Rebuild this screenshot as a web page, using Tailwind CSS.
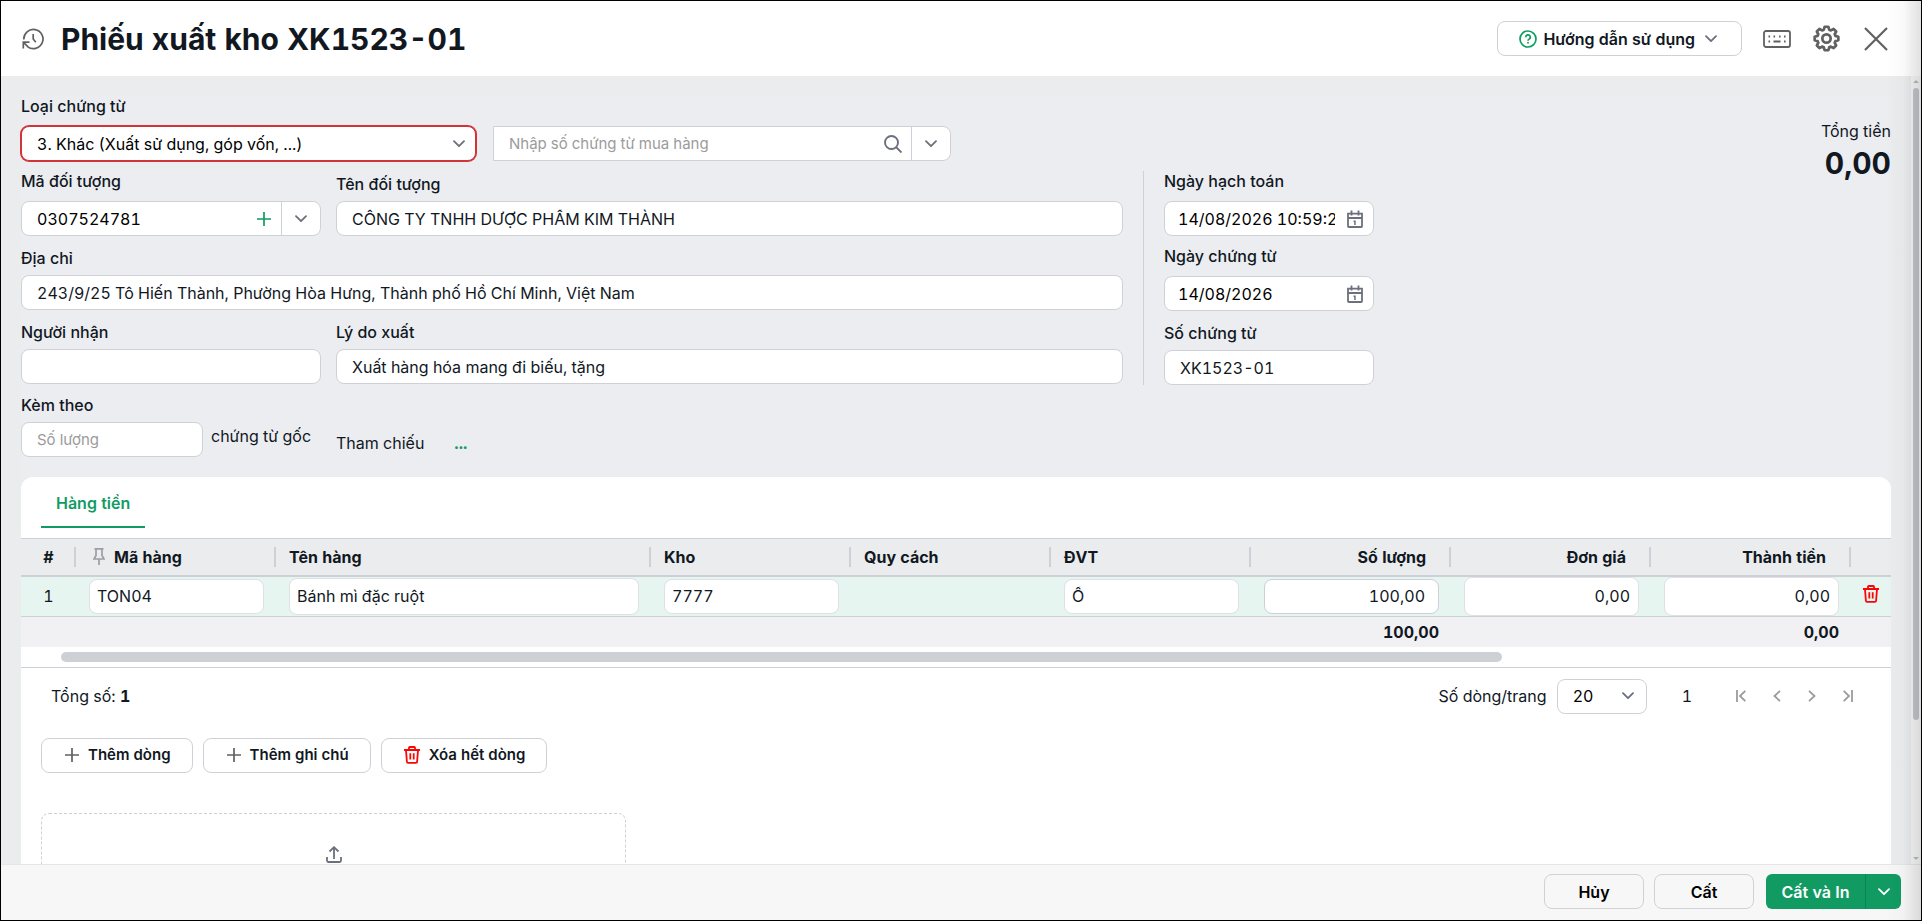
<!DOCTYPE html>
<html lang="vi">
<head>
  <meta charset="UTF-8">
  <meta name="viewport" content="width=device-width, initial-scale=1.0">
  <title>Phiếu xuất kho XK1523-01</title>
  <script src="https://cdn.jsdelivr.net/npm/@tailwindcss/browser@4"></script>
</head>
<body class="font-['Inter','Noto_Sans',sans-serif] text-base leading-5 text-[#11181f] tabular-nums">
  <!-- Shared icons -->
  <svg class="hidden">
    <symbol id="chevron" viewBox="0 0 12 8"><path d="M1 1.2l5 5 5-5" fill="none" stroke="currentColor" stroke-width="1.8" stroke-linecap="round" stroke-linejoin="round"/></symbol>
    <symbol id="plus" viewBox="0 0 14 14"><path d="M7 0v14M0 7h14" fill="none" stroke="currentColor" stroke-width="1.7"/></symbol>
    <symbol id="calendar" viewBox="0 0 16 18"><path d="M1 3.6h14v12.6a.8.8 0 0 1-.8.8H1.8a.8.8 0 0 1-.8-.8zM1 8h14M4.5 .5v5M11.5 .5v5" fill="none" stroke="currentColor" stroke-width="1.8"/><path d="M6.500 10.500h2.200v4.500h-1.500v-3h-.7z" fill="currentColor"/></symbol>
    <symbol id="trash" viewBox="0 0 16 18"><path d="M0 4h16M5 3.600V1.800a.8.8 0 0 1 .8-.8h4.400a.8.8 0 0 1 .8.8v1.800M2 4.200l.9 11.600a1.200 1.200 0 0 0 1.200 1.100h7.800a1.200 1.200 0 0 0 1.200-1.100L14 4.200M6.300 7.200v6.300M9.700 7.200v6.300" fill="none" stroke="currentColor" stroke-width="1.800"/></symbol>
  </svg>

  <div class="relative flex h-screen flex-col overflow-hidden border border-black bg-white">
    <!-- Header -->
    <header class="flex h-[75px] shrink-0 items-center justify-between pr-[33px] pl-[21px]">
      <div class="flex items-center gap-[17px]">
        <button type="button" aria-label="Lịch sử" class="text-[#616161]">
          <svg class="size-[22px]" viewBox="0 0 22 22" fill="none" stroke="currentColor" stroke-width="1.700"><path d="M1.800 11.500A9.600 9.600 0 1 1 5.500 18.600M1.300 20.500v-6.300h6.200M1.600 14.400l4.400 4.500M11.200 6v5l2.600 3.200"/></svg>
        </button>
        <h1 class="text-[30px] leading-10 font-bold">Phiếu xuất kho XK1523-01</h1>
      </div>
      <div class="flex items-center text-[#616161]">
        <button type="button" class="mr-[21px] flex h-[35px] items-center gap-1.5 rounded-lg border border-[#d0d1d6] pr-6 pl-[21px] font-semibold text-[#11181f]">
          <svg class="size-[18px] text-[#119b63]" viewBox="0 0 18 18" fill="none" stroke="currentColor" stroke-width="1.700"><circle cx="9" cy="9" r="8"/><path d="M6.700 7.200a2.300 2.300 0 1 1 3.500 1.900c-.8.500-1.200.8-1.200 1.700M9 12v1.600"/></svg>
          Hướng dẫn sử dụng
          <svg class="ml-1 h-2 w-3 text-[#6b707c]"><use href="#chevron"/></svg>
        </button>
        <button type="button" aria-label="Phím tắt">
          <svg class="h-[18px] w-7" viewBox="0 0 28 18"><rect x="1" y="1" width="26" height="16" rx="2" fill="none" stroke="currentColor" stroke-width="1.800"/><path d="M5.500 6.500h1.600M10.500 6.500h1.600M16 6.500h1.600M21 6.500h1.600M5.500 11.500h1.600M10.500 11.500h7M21 11.500h1.600" stroke="currentColor" stroke-width="1.800"/></svg>
        </button>
        <button type="button" aria-label="Thiết lập" class="ml-[22px]">
          <svg class="size-[27px]" viewBox="0 0 26 26" fill="none" stroke="currentColor" stroke-width="2.600" stroke-linejoin="round"><path d="M11.200 1.700h3.600l.8 2.800 1.600.7 2.600-1.400 2.500 2.500-1.400 2.600.7 1.600 2.800.8v3.400l-2.800.8-.7 1.600 1.400 2.600-2.500 2.500-2.600-1.400-1.600.7-.8 2.800h-3.600l-.8-2.800-1.600-.7-2.600 1.400-2.500-2.500 1.400-2.600-.7-1.600-2.800-.8v-3.400l2.800-.8.7-1.600-1.400-2.600 2.500-2.500 2.600 1.400 1.600-.7z"/><circle cx="13" cy="13" r="4"/></svg>
        </button>
        <button type="button" aria-label="Đóng" class="ml-6">
          <svg class="size-6" viewBox="0 0 24 24" stroke="currentColor" stroke-width="2.200"><path d="M1 1l22 22M23 1L1 23"/></svg>
        </button>
      </div>
    </header>

    <!-- Body -->
    <div class="flex min-h-0 flex-1">
      <main class="min-w-0 flex-1 overflow-hidden bg-[#ebecee] p-5">
        <form id="voucher" class="flex items-start justify-between bg-[#ecedf1] pb-5">
          <div class="max-w-[1353px] flex-1">
            <label for="type" class="mb-2.5 block font-medium">Loại chứng từ</label>
            <div class="flex gap-[17px]">
              <div class="grid w-[455px] items-center">
                <select id="type" class="h-[35px] appearance-none rounded-lg border border-[#d13438] bg-white px-[15px] text-black ring-1 ring-[#d13438] [grid-area:1/1]">
                  <option>3. Khác (Xuất sử dụng, góp vốn, ...)</option>
                </select>
                <svg class="pointer-events-none mr-[11px] h-2 w-3 justify-self-end text-[#6b707c] [grid-area:1/1]"><use href="#chevron"/></svg>
              </div>
              <div class="flex h-[35px] w-[458px] items-center rounded-r-lg border border-[#d0d1d6] bg-white">
                <input type="text" aria-label="Số chứng từ mua hàng" placeholder="Nhập số chứng từ mua hàng" class="min-w-0 flex-1 pl-[15px] text-[15px] outline-none placeholder:text-[#9b9b9b]">
                <button type="button" aria-label="Tìm kiếm" class="mr-[9px] text-[#6b707c]">
                  <svg class="size-[18px]" viewBox="0 0 18 18" fill="none" stroke="currentColor" stroke-width="1.900"><circle cx="7.500" cy="7.500" r="6.500"/><path d="M12 12l5.500 5.500"/></svg>
                </button>
                <button type="button" aria-label="Mở danh sách" class="flex h-full w-[39px] items-center justify-center border-l border-[#d0d1d6] text-[#6b707c]"><svg class="h-2 w-3"><use href="#chevron"/></svg></button>
              </div>
            </div>

            <div class="mt-2.5 flex items-start">
              <div class="min-w-0 flex-1">
                <div class="flex items-end gap-[15px]">
                  <div class="w-[300px]">
                    <label for="code" class="mb-2.5 block font-medium">Mã đối tượng</label>
                    <div class="flex h-[35px] items-center rounded-lg border border-[#d0d1d6] bg-white">
                      <input id="code" type="text" value="0307524781" class="min-w-0 flex-1 pl-[15px] text-black outline-none">
                      <button type="button" aria-label="Thêm đối tượng" class="mr-2.5 text-[#119b63]"><svg class="size-3.5"><use href="#plus"/></svg></button>
                      <button type="button" aria-label="Chọn đối tượng" class="flex h-full w-[39px] items-center justify-center border-l border-[#d0d1d6] text-[#6b707c]"><svg class="h-2 w-3"><use href="#chevron"/></svg></button>
                    </div>
                  </div>
                  <div class="min-w-0 flex-1">
                    <label for="name" class="mb-[7px] block font-medium">Tên đối tượng</label>
                    <input id="name" type="text" value="CÔNG TY TNHH DƯỢC PHẨM KIM THÀNH" class="block h-[35px] w-full rounded-lg border border-[#d0d1d6] bg-white px-[15px]">
                  </div>
                </div>
                <div class="mt-3">
                  <label for="address" class="mb-[7px] block font-medium">Địa chỉ</label>
                  <input id="address" type="text" value="243/9/25 Tô Hiến Thành, Phường Hòa Hưng, Thành phố Hồ Chí Minh, Việt Nam" class="block h-[35px] w-full rounded-lg border border-[#d0d1d6] bg-white px-[15px]">
                </div>
                <div class="mt-3 flex gap-[15px]">
                  <div class="w-[300px]">
                    <label for="receiver" class="mb-[7px] block font-medium">Người nhận</label>
                    <input id="receiver" type="text" class="block h-[35px] w-full rounded-lg border border-[#d0d1d6] bg-white px-[15px]">
                  </div>
                  <div class="min-w-0 flex-1">
                    <label for="reason" class="mb-[7px] block font-medium">Lý do xuất</label>
                    <input id="reason" type="text" value="Xuất hàng hóa mang đi biếu, tặng" class="block h-[35px] w-full rounded-lg border border-[#d0d1d6] bg-white px-[15px]">
                  </div>
                </div>
              </div>

              <div class="ml-5 border-l border-[#d0d1d6] pl-5">
                <label for="posted" class="mb-2.5 block font-medium">Ngày hạch toán</label>
                <div class="flex h-[35px] w-[210px] items-center rounded-lg border border-[#d0d1d6] bg-white pr-2.5 pl-[13px] text-[#6b707c]">
                  <input id="posted" type="text" value="14/08/2026 10:59:27" class="mr-3 min-w-0 flex-1 text-black outline-none">
                  <svg class="h-[18px] w-4 shrink-0"><use href="#calendar"/></svg>
                </div>
                <label for="issued" class="mt-2.5 mb-2.5 block font-medium">Ngày chứng từ</label>
                <div class="flex h-[35px] w-[210px] items-center rounded-lg border border-[#d0d1d6] bg-white pr-2.5 pl-[13px] text-[#6b707c]">
                  <input id="issued" type="text" value="14/08/2026" class="mr-3 min-w-0 flex-1 text-black outline-none">
                  <svg class="h-[18px] w-4 shrink-0"><use href="#calendar"/></svg>
                </div>
                <label for="number" class="mt-3 mb-[7px] block font-medium">Số chứng từ</label>
                <input id="number" type="text" value="XK1523-01" class="block h-[35px] w-[210px] rounded-lg border border-[#d0d1d6] bg-white px-[15px]">
              </div>
            </div>

            <div class="mt-2.5">
              <label for="attached" class="mb-[7px] block font-medium">Kèm theo</label>
              <div class="flex items-center">
                <input id="attached" type="text" placeholder="Số lượng" class="h-[35px] w-[182px] rounded-lg border border-[#d0d1d6] bg-white px-[15px] text-[15px] placeholder:text-[#9b9b9b]">
                <span class="w-[133px] pb-2 pl-2">chứng từ gốc</span>
                <span class="pt-1.5">Tham chiếu</span>
                <a href="#" class="ml-[30px] pt-1.5 font-bold text-[#119b63]">...</a>
              </div>
            </div>
          </div>

          <!-- Total -->
          <div class="pt-[25px] text-right">
            <div>Tổng tiền</div>
            <div class="mt-0.5 text-[30px] leading-10 font-bold">0,00</div>
          </div>
        </form>

        <!-- Detail card -->
        <section class="rounded-t-xl bg-white">
          <nav class="flex px-5 pt-2 pb-2.5">
            <button type="button" class="border-b-2 border-[#119b63] px-[15px] pt-2 pb-[13px] font-semibold text-[#119b63]">Hàng tiền</button>
          </nav>

          <table class="w-full table-fixed border-t border-[#d0d1d6]">
            <colgroup>
              <col class="w-[55px]"><col class="w-[200px]"><col><col class="w-[200px]"><col class="w-[200px]"><col class="w-[200px]"><col class="w-[200px]"><col class="w-[200px]"><col class="w-[200px]"><col class="w-10">
            </colgroup>
            <thead class="border-b-2 border-[#cdd0d6] bg-[#ebecee] text-left">
              <tr class="h-[37px]">
                <th class="p-0"><div class="flex items-center justify-between"><span class="flex-1 pl-0.5 text-center">#</span><i class="h-5 w-0.5 bg-[#cdd0d6]"></i></div></th>
                <th class="p-0 pl-[17px]">
                  <div class="flex items-center justify-between">
                    <span class="flex items-center gap-[9px]">
                      <svg class="h-[17px] w-3 text-[#9b9ea6]" viewBox="0 0 12 17" fill="none" stroke="currentColor" stroke-width="1.700"><path d="M1.500 .8h9M3 1v6.500L1 11h10L9 7.500V1M6 11v6"/></svg>
                      Mã hàng
                    </span>
                    <i class="h-5 w-0.5 bg-[#cdd0d6]"></i>
                  </div>
                </th>
                <th class="p-0 pl-[13px]"><div class="flex items-center justify-between">Tên hàng<i class="h-5 w-0.5 bg-[#cdd0d6]"></i></div></th>
                <th class="p-0 pl-[13px]"><div class="flex items-center justify-between">Kho<i class="h-5 w-0.5 bg-[#cdd0d6]"></i></div></th>
                <th class="p-0 pl-[13px]"><div class="flex items-center justify-between">Quy cách<i class="h-5 w-0.5 bg-[#cdd0d6]"></i></div></th>
                <th class="p-0 pl-[13px]"><div class="flex items-center justify-between">ĐVT<i class="h-5 w-0.5 bg-[#cdd0d6]"></i></div></th>
                <th class="p-0"><div class="flex items-center justify-end gap-[23px]">Số lượng<i class="h-5 w-0.5 bg-[#cdd0d6]"></i></div></th>
                <th class="p-0"><div class="flex items-center justify-end gap-[23px]">Đơn giá<i class="h-5 w-0.5 bg-[#cdd0d6]"></i></div></th>
                <th class="p-0"><div class="flex items-center justify-end gap-[23px]">Thành tiền<i class="h-5 w-0.5 bg-[#cdd0d6]"></i></div></th>
                <th class="p-0"></th>
              </tr>
            </thead>
            <tbody>
              <tr class="h-[41px] border-b border-[#cdd0d6] bg-[#e6f5ef]">
                <td class="p-0 text-center">1</td>
                <td class="py-0 pr-3 pl-[13px]"><input type="text" aria-label="Mã hàng" value="TON04" class="block h-[35px] w-full rounded-lg border border-[#dfe0e3] bg-white px-[7px] leading-8"></td>
                <td class="py-0 pr-3 pl-[13px]"><input type="text" aria-label="Tên hàng" value="Bánh mì đặc ruột" class="block h-[37px] w-full rounded-lg border border-[#dfe0e3] bg-white px-[7px] leading-8"></td>
                <td class="py-0 pr-3 pl-[13px]"><input type="text" aria-label="Kho" value="7777" class="block h-[35px] w-full rounded-lg border border-[#dfe0e3] bg-white px-[7px] leading-8"></td>
                <td class="p-0"></td>
                <td class="py-0 pr-3 pl-[13px]"><input type="text" aria-label="ĐVT" value="Ổ" class="block h-[35px] w-full rounded-lg border border-[#dfe0e3] bg-white px-[7px] leading-8"></td>
                <td class="py-0 pr-3 pl-[13px]"><input type="text" aria-label="Số lượng" value="100,00" class="block h-[35px] w-full rounded-lg border border-[#cdd0d6] bg-white px-[13px] text-right leading-8"></td>
                <td class="py-0 pr-3 pl-[13px]"><input type="text" aria-label="Đơn giá" value="0,00" class="block h-[39px] w-full rounded-lg border border-[#dfe0e3] bg-white px-2 text-right leading-8"></td>
                <td class="py-0 pr-3 pl-[13px]"><input type="text" aria-label="Thành tiền" value="0,00" class="block h-[39px] w-full rounded-lg border border-[#dfe0e3] bg-white px-2 text-right leading-8"></td>
                <td class="p-0"><button type="button" aria-label="Xóa dòng" class="mx-auto block pb-1 text-[#f90606]"><svg class="h-[18px] w-4"><use href="#trash"/></svg></button></td>
              </tr>
            </tbody>
            <tfoot class="bg-[#f1f1f3] text-right font-bold">
              <tr class="h-[30px]">
                <td colspan="6"></td>
                <td class="py-0 pr-3">100,00</td>
                <td></td>
                <td class="py-0 pr-3">0,00</td>
                <td></td>
              </tr>
            </tfoot>
          </table>
          <div class="border-b border-[#cdd0d6] py-[5px] pl-10">
            <div class="h-2.5 w-[78.75%] rounded-full bg-[#cdd0d5]"></div>
          </div>

          <!-- Pager -->
          <div class="flex items-center justify-between pt-[11px] pb-3 pr-[38px] pl-[30px]">
            <div>Tổng số: <b>1</b></div>
            <div class="flex items-center text-[#9b9b9b]">
              <label for="rows" class="mr-2.5 text-[#11181f]">Số dòng/trang</label>
              <div class="grid w-[90px] items-center">
                <select id="rows" class="h-[35px] appearance-none rounded-lg border border-[#d0d1d6] bg-white px-[15px] text-black [grid-area:1/1]">
                  <option>20</option>
                </select>
                <svg class="pointer-events-none mr-[13px] h-2 w-3 justify-self-end text-[#6b707c] [grid-area:1/1]"><use href="#chevron"/></svg>
              </div>
              <span class="mr-11 ml-[35px] text-[#11181f]">1</span>
              <button type="button" aria-label="Trang đầu"><svg class="h-3 w-2.5" viewBox="0 0 10 12" fill="none" stroke="currentColor" stroke-width="1.800"><path d="M1 0v12M9.300 .8L4 6l5.300 5.200"/></svg></button>
              <button type="button" aria-label="Trang trước" class="ml-[27px]"><svg class="h-3 w-2" viewBox="0 0 8 12" fill="none" stroke="currentColor" stroke-width="1.800"><path d="M7 .8L1.500 6 7 11.200"/></svg></button>
              <button type="button" aria-label="Trang sau" class="ml-[27px]"><svg class="h-3 w-2" viewBox="0 0 8 12" fill="none" stroke="currentColor" stroke-width="1.800"><path d="M1 .8L6.500 6 1 11.200"/></svg></button>
              <button type="button" aria-label="Trang cuối" class="ml-[27px]"><svg class="h-3 w-2.5" viewBox="0 0 10 12" fill="none" stroke="currentColor" stroke-width="1.800"><path d="M9 0v12M.7 .8L6 6 .7 11.200"/></svg></button>
            </div>
          </div>

          <div class="flex gap-2.5 px-5 pt-3 text-[15px] font-semibold">
            <button type="button" class="flex h-[35px] items-center gap-[9px] rounded-lg border border-[#d0d1d6] pr-[21px] pl-[23px]"><svg class="size-3.5 text-[#616161]"><use href="#plus"/></svg>Thêm dòng</button>
            <button type="button" class="flex h-[35px] items-center gap-[9px] rounded-lg border border-[#d0d1d6] pr-[21px] pl-[23px]"><svg class="size-3.5 text-[#616161]"><use href="#plus"/></svg>Thêm ghi chú</button>
            <button type="button" class="flex h-[35px] items-center gap-[9px] rounded-lg border border-[#d0d1d6] pr-[21px] pl-[22px]"><svg class="h-[18px] w-4 text-[#f90606]"><use href="#trash"/></svg>Xóa hết dòng</button>
          </div>

          <!-- Attachments -->
          <div class="px-5 pt-10">
            <div class="flex h-[120px] w-[585px] justify-center rounded-lg border border-dashed border-[#cdd0d6] pt-8">
              <svg class="h-[17px] w-4 text-[#6b707c]" viewBox="0 0 16 17" fill="none" stroke="currentColor" stroke-width="1.800"><path d="M8 13V1.500M3.500 5.500L8 1.200l4.500 4.300M1 11v3.600A1.400 1.400 0 0 0 2.400 16h11.200a1.400 1.400 0 0 0 1.400-1.400V11"/></svg>
            </div>
          </div>
        </section>
      </main>

      <!-- Scrollbar -->
      <div class="flex w-2.5 shrink-0 flex-col items-center justify-between bg-[#f7f7f7] py-1 text-[#b8bbc0]">
        <svg class="h-[3px] w-1.5" viewBox="0 0 6 3"><path d="M0 3l3-3 3 3z" fill="currentColor"/></svg>
        <div class="mt-[5px] mb-auto h-[81%] w-1.5 rounded-full bg-[#c2c5ca]"></div>
        <svg class="h-[3px] w-1.5" viewBox="0 0 6 3"><path d="M0 0l3 3 3-3z" fill="currentColor"/></svg>
      </div>
    </div>

    <!-- Footer -->
    <footer class="flex h-14 shrink-0 items-center justify-end gap-2.5 border-t border-[#e6e6e8] bg-[#f7f7f7] pr-5 pb-0.5 font-semibold text-black">
      <button type="button" class="h-[35px] w-[100px] rounded-lg border border-[#d0d1d6]">Hủy</button>
      <button type="button" class="h-[35px] w-[100px] rounded-lg border border-[#d0d1d6]">Cất</button>
      <div class="ml-0.5 flex h-[35px] overflow-hidden rounded-md bg-[#119b63] text-white">
        <button type="button" class="w-[99px]">Cất và In</button>
        <button type="button" aria-label="Thêm lựa chọn" class="flex w-9 items-center justify-center border-l border-[#0b8453]"><svg class="h-2 w-3"><use href="#chevron"/></svg></button>
      </div>
    </footer>

    <div class="pointer-events-none absolute inset-y-0 right-0 w-9 bg-linear-to-r from-transparent via-black/2 to-black/12"></div>
  </div>
</body>
</html>
